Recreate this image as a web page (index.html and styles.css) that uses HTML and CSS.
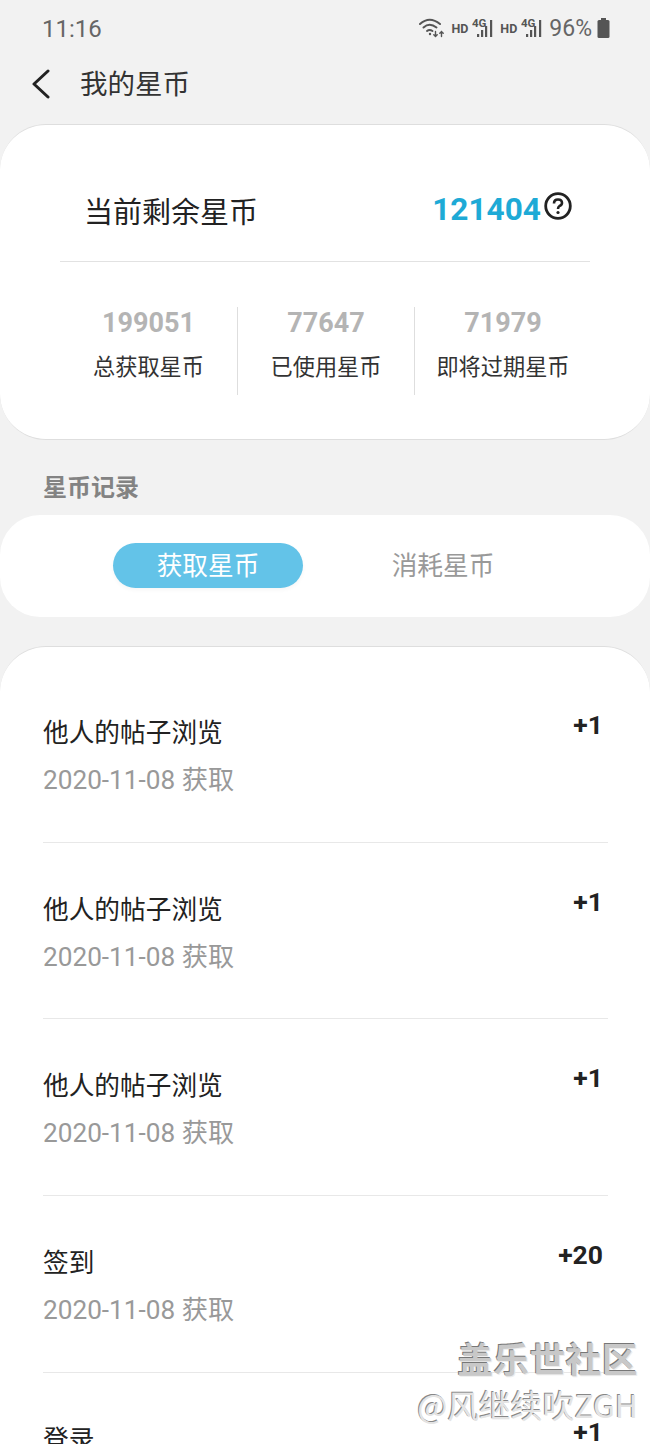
FILE: index.html
```html
<!DOCTYPE html>
<html lang="zh">
<head>
<meta charset="utf-8">
<title>我的星币</title>
<link rel="stylesheet" href="styles.css">
</head>
<body>
<div class="page">
  <header class="status">
    <span class="time">11:16</span>
    <div class="status-right">
      <svg class="wifi" width="25" height="20" viewBox="0 0 25 20" fill="none" stroke="#555" stroke-linecap="round">
        <path d="M1 6 Q10.500 -2.500 21 6" stroke-width="2"/>
        <path d="M4.500 9.500 Q10.500 4 17.500 9.500" stroke-width="2"/>
        <path d="M8 13 Q10.500 11 13.500 13" stroke-width="2"/>
        <circle cx="11" cy="16" r="1.200" fill="#555" stroke="none"/>
        <path d="M16.500 13.500v5M14.800 16.800l1.700 1.700 1.700-1.700M22.500 18.500v-5M20.800 15.200l1.700-1.700 1.700 1.700" stroke-width="1.400"/>
      </svg>
      <span class="hd">HD</span>
      <svg class="sig" width="22" height="22" viewBox="0 0 22 22" fill="#555">
        <text x="0" y="10" class="sig-text">4G</text>
        <rect x="5" y="17" width="2.200" height="3"/><rect x="9" y="13" width="2.200" height="7"/><rect x="13" y="9" width="2.200" height="11"/><rect x="18" y="3" width="2.200" height="17"/>
      </svg>
      <span class="hd">HD</span>
      <svg class="sig" width="22" height="22" viewBox="0 0 22 22" fill="#555">
        <text x="0" y="10" class="sig-text">4G</text>
        <rect x="5" y="17" width="2.200" height="3"/><rect x="9" y="13" width="2.200" height="7"/><rect x="13" y="9" width="2.200" height="11"/><rect x="18" y="3" width="2.200" height="17"/>
      </svg>
      <span class="pct">96%</span>
      <svg class="batt" width="13" height="20" viewBox="0 0 13 20" fill="#555">
        <rect x="4" y="0" width="5" height="3"/><rect x="0.500" y="2" width="12" height="18" rx="1.500"/>
      </svg>
    </div>
  </header>

  <nav class="nav">
    <svg class="back" width="20" height="30" viewBox="0 0 20 30" fill="none" stroke="#222" stroke-width="3" stroke-linecap="round" stroke-linejoin="round"><path d="M17 2 L3 15 L17 28"/></svg>
    <h1 class="title">我的星币</h1>
  </nav>

  <section class="card summary">
    <div class="balance">
      <span class="balance-label">当前剩余星币</span>
      <div class="balance-right">
        <span class="balance-num">121404</span>
        <svg class="help" width="28" height="28" viewBox="0 0 28 28" fill="none" stroke="#222">
          <circle cx="14" cy="14" r="12.300" stroke-width="2.800"/>
          <path d="M10 11.500 Q10 7.500 14 7.500 Q18 7.500 18 11 Q18 13 15.500 14 Q14 15 14 17" stroke-width="2.600"/>
          <circle cx="14" cy="20.500" r="1.600" fill="#222" stroke="none"/>
        </svg>
      </div>
    </div>
    <div class="stats">
      <div class="stat"><div class="stat-num">199051</div><div class="stat-label">总获取星币</div></div>
      <div class="stat"><div class="stat-num">77647</div><div class="stat-label">已使用星币</div></div>
      <div class="stat"><div class="stat-num">71979</div><div class="stat-label">即将过期星币</div></div>
    </div>
  </section>

  <h2 class="section-title">星币记录</h2>

  <div class="tabs">
    <span class="tab tab-active">获取星币</span>
    <span class="tab">消耗星币</span>
  </div>

  <section class="card list">
    <div class="row"><div><div class="row-title">他人的帖子浏览</div><div class="row-date">2020-11-08 获取</div></div><div class="row-val">+1</div></div>
    <div class="row"><div><div class="row-title">他人的帖子浏览</div><div class="row-date">2020-11-08 获取</div></div><div class="row-val">+1</div></div>
    <div class="row"><div><div class="row-title">他人的帖子浏览</div><div class="row-date">2020-11-08 获取</div></div><div class="row-val">+1</div></div>
    <div class="row"><div><div class="row-title">签到</div><div class="row-date">2020-11-08 获取</div></div><div class="row-val">+20</div></div>
    <div class="row"><div><div class="row-title">登录</div></div><div class="row-val">+1</div></div>
  </section>

  <div class="watermark">
    <div class="wm-top">盖乐世社区</div>
    <div class="wm-bottom">@风继续吹ZGH</div>
  </div>
</div>
</body>
</html>
```
FILE: styles.css
```css
* { box-sizing: border-box; }
html, body { margin: 0; padding: 0; }
body {
  width: 650px;
  height: 1444px;
  overflow: hidden;
  background: #f2f2f2;
  font-family: "Noto Sans CJK SC", "Roboto", sans-serif;
}
.page { position: relative; height: 1444px; overflow: hidden; }

.status {
  height: 56px;
  padding: 15px 40px 0 42px;
  display: flex;
  justify-content: space-between;
  align-items: flex-start;
}
.time { font: 24px/28px Roboto, sans-serif; color: #666; }
.status-right { display: flex; align-items: center; height: 28px; color: #555; }
.wifi { margin-right: 7px; margin-top: -3px; }
.hd { font: 700 12.500px/14px Roboto, sans-serif; margin-right: 4px; margin-top: 0; }
.sig { margin-right: 6px; margin-top: -2px; }
.sig-text { font: 700 11.500px Roboto, sans-serif; }
.pct { font: 23px/28px Roboto, sans-serif; color: #666; margin-right: 5px; }
.batt { margin-top: -2px; }

.nav { height: 68px; padding: 0 0 13px 31px; display: flex; align-items: center; }
.back { margin-right: 30px; }
.title { margin: -4px 0 0 -1px; font-size: 27.500px; font-weight: 400; color: #333; line-height: 40px; }

.card {
  background: #fff;
  border-top: 1px solid #dedede;
  border-radius: 46px 46px 0 0;
}
.summary {
  height: 316px;
  border: 1px solid #dedede;
  border-width: 1px 0;
  border-radius: 46px;
  padding: 0 60px;
}
.balance {
  height: 137px;
  padding: 34px 18px 0 24px;
  border-bottom: 1px solid #e2e2e2;
  display: flex;
  justify-content: space-between;
  align-items: center;
}
.balance-label { font-size: 29px; color: #222; line-height: 44px; }
.balance-right { display: flex; align-items: flex-start; }
.balance-num { font: 700 31.600px/38px Roboto, sans-serif; color: #1eaad6; margin-top: -1px; }
.help { margin: 0 0 0 3px; }

.stats { display: flex; margin: 45px -2px 0 0; }
.stat { width: 177px; height: 88px; text-align: center; border-left: 1px solid #dedede; }
.stat:first-child { border-left: 0; }
.stat-num { font: 700 27px/32px Roboto, sans-serif; color: #b4b4b4; }
.stat-label { font-size: 22.200px; color: #333; line-height: 32px; margin-top: 10px; }

.section-title {
  margin: 0;
  height: 75px;
  padding: 26px 0 0 43px;
  font-size: 24px;
  font-weight: 700;
  color: #838383;
  line-height: 40px;
}

.tabs {
  height: 102px;
  background: #fff;
  border-radius: 40px;
  display: flex;
  align-items: center;
  padding: 0 0 2px 113px;
}
.tab { width: 190px; height: 45px; line-height: 41px; text-align: center; font-size: 25.700px; color: #999; border-radius: 23px; }
.tab-active { background: #63c3e8; color: #fff; margin-right: 45px; box-shadow: 0 2px 4px rgba(0,0,0,0.04); }

.list { margin-top: 29px; padding: 19px 42px 0 43px; height: 800px; }
.row {
  height: 176.670px;
  display: flex;
  justify-content: space-between;
  border-bottom: 1px solid #e8e8e8;
}
.row:last-child { border-bottom: 0; }
.row-title { font-size: 25.700px; color: #222; line-height: 40px; margin-top: 45px; }
.row-date { font: 26.200px/36px Roboto, "Noto Sans CJK SC", sans-serif; color: #999; margin-top: 11px; }
.row-val { font: 700 26.500px/24px Roboto, sans-serif; color: #222; padding-right: 5px; margin-top: 47px; }

.watermark { position: absolute; right: 12px; top: 1335px; text-align: right; }
.wm-top {
  font-size: 35.500px; font-weight: 700; line-height: 46px; color: #c8c8c8; letter-spacing: 0.6px;
  text-shadow: -1px -1px 0 #777, 1px 1px 0 #eee;
}
.wm-bottom {
  font-size: 31.800px; line-height: 34px; margin-top: 6px; color: #e4e4e4;
  text-shadow: -1px -1px 0 #888;
}
```
